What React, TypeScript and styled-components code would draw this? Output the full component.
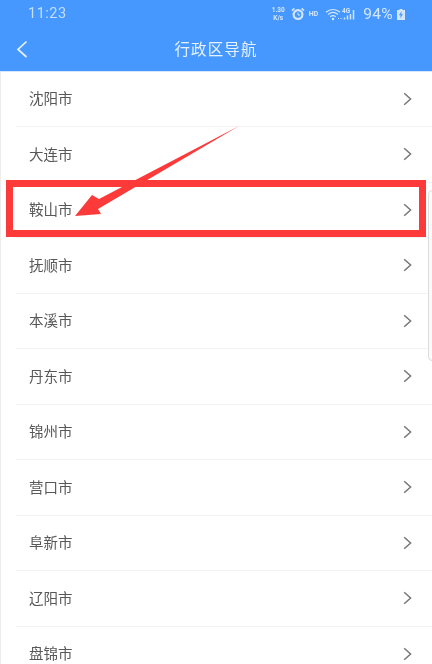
import React from 'react';
import styled, { createGlobalStyle } from 'styled-components';

const GlobalStyle = createGlobalStyle`
  html, body {
    margin: 0;
    padding: 0;
    background: #fff;
  }
`;

const PageDiv = styled.div`
  position: relative;
  width: 432px;
  height: 664px;
  overflow: hidden;
  background: #fff;
  font-family: 'Noto Sans CJK SC', Roboto, sans-serif;
`;

const HeaderDiv = styled.div`
  background: #4698fe;
  border-bottom: 1px solid #d3e6fd;
  color: #e6f1ff;
  filter: blur(0.35px);
`;

const StatusBar = styled.div`
  display: flex;
  align-items: center;
  justify-content: space-between;
  height: 27px;
  padding: 0 27px 0 28px;
`;

const TimeText = styled.span`
  font-family: Roboto, sans-serif;
  font-size: 14.5px;
  letter-spacing: 0.5px;
  color: #c5dffe;
`;

const StatusIcons = styled.div`
  display: flex;
  align-items: center;
  padding-top: 1px;
  color: #d3e6fe;
`;

const SpeedText = styled.span`
  display: flex;
  flex-direction: column;
  align-items: center;
  font-family: Roboto, sans-serif;
  font-size: 6.5px;
  font-weight: 700;
  line-height: 8px;
  margin-right: 6px;
`;

const HdText = styled.span`
  font-family: Roboto, sans-serif;
  font-size: 7px;
  font-weight: 700;
  margin: 0 7px 0 4px;
`;

const BatteryText = styled.span`
  font-family: Roboto, sans-serif;
  font-size: 15.5px;
  margin: 0 4px 0 6px;
  letter-spacing: 0.3px;
`;

const NavBar = styled.div`
  display: flex;
  align-items: center;
  justify-content: center;
  position: relative;
  height: 43.5px;
  padding-bottom: 2px;
  box-sizing: border-box;
`;

const BackIcon = styled.svg`
  position: absolute;
  left: 15px;
  top: 12px;
`;

const TitleText = styled.span`
  font-size: 15.5px;
  letter-spacing: 1.1px;
`;

const RowList = styled.div`
  display: flex;
  flex-direction: column;
  border-left: 1px solid #ececec;
  filter: blur(0.35px);
`;

const Row = styled.div`
  display: flex;
  align-items: center;
  justify-content: space-between;
  flex: 0 0 55.5px;
  box-sizing: border-box;
  margin-left: 15px;
  padding: 0 20px 0 13px;
  border-bottom: 1px solid #f2f2f2;
  color: #585858;
  font-size: 14.5px;
`;

const CityName = styled.span`
  padding-bottom: 2px;
`;

const HighlightBox = styled.div`
  position: absolute;
  left: 6px;
  top: 180px;
  width: 420px;
  height: 57px;
  box-sizing: border-box;
  border: 7px solid #fc3a3a;
`;

const ArrowSvg = styled.svg`
  position: absolute;
  left: 0;
  top: 0;
`;

const ScrollHandle = styled.div`
  position: absolute;
  left: 428px;
  top: 190px;
  width: 12px;
  height: 171px;
  box-sizing: border-box;
  border: 1px solid #dcdcdc;
  border-radius: 4px;
  background: #fafafa;
`;

const cities = ['沈阳市', '大连市', '鞍山市', '抚顺市', '本溪市', '丹东市', '锦州市', '营口市', '阜新市', '辽阳市', '盘锦市'];

function Chevron() {
  return (
    <svg width="9" height="14" viewBox="0 0 9 14" fill="none">
      <path d="M1.2 1.2L7.6 7L1.2 12.8" stroke="#777" strokeWidth="1.5" />
    </svg>
  );
}

export default function App() {
  return (
    <PageDiv>
      <GlobalStyle />
      <HeaderDiv>
        <StatusBar>
          <TimeText>11:23</TimeText>
          <StatusIcons>
            <SpeedText>
              <span>1.30</span>
              <span>K/s</span>
            </SpeedText>
            {/* alarm clock */}
            <svg width="14" height="14" viewBox="0 0 14 14" fill="none">
              <circle cx="7" cy="7.6" r="4.4" stroke="currentColor" strokeWidth="2.2" />
              <path d="M7 5.5v2.5h2" stroke="currentColor" strokeWidth="1" />
              <path d="M1 3.6L3.4 1.3M13 3.6L10.6 1.3" stroke="currentColor" strokeWidth="1.6" />
            </svg>
            <HdText>HD</HdText>
            {/* wifi */}
            <svg width="17" height="13" viewBox="0 0 17 13" fill="none">
              <path d="M1 4.2C5 .6 11 .6 15 4.2" stroke="currentColor" strokeWidth="1.2" />
              <path d="M3 6.6C6 4 10 4 13 6.6" stroke="currentColor" strokeWidth="1.2" />
              <path d="M5.2 8.8C7 7.4 9 7.4 10.8 8.8" stroke="currentColor" strokeWidth="1.2" />
              <circle cx="8" cy="11" r="1.2" fill="currentColor" />
              <path d="M13 10.5h1M15.5 10.5h1" stroke="currentColor" strokeWidth="1.2" />
            </svg>
            {/* 4G signal */}
            <svg width="15" height="14" viewBox="0 0 15 14" fill="none">
              <text x="0" y="6" fontSize="6.5" fontWeight="700" fontFamily="Roboto, sans-serif" fill="currentColor">4G</text>
              <path d="M2.5 12.5v-2M5.5 12.5v-4M8.5 12.5V7M11.5 12.5V3" stroke="currentColor" strokeWidth="1.5" />
            </svg>
            <BatteryText>94%</BatteryText>
            {/* charging battery */}
            <svg width="8" height="11" viewBox="0 0 8 11">
              <path d="M2.5 0h3v1H8v10H0V1h2.5z" fill="currentColor" />
              <path d="M4.6 2L2 6.2h1.7L3.2 9.4 6 5.2H4.2z" fill="#4698fe" />
            </svg>
          </StatusIcons>
        </StatusBar>
        <NavBar>
          <BackIcon width="14" height="20" viewBox="0 0 14 20" fill="none">
            <path d="M11.5 2.5L3 10.5L11.5 18" stroke="#e6f1ff" strokeWidth="1.7" />
          </BackIcon>
          <TitleText>行政区导航</TitleText>
        </NavBar>
      </HeaderDiv>
      <RowList>
        {cities.map((city) => (
          <Row key={city}>
            <CityName>{city}</CityName>
            <Chevron />
          </Row>
        ))}
      </RowList>
      <ScrollHandle />
      <HighlightBox />
      <ArrowSvg width="432" height="664" viewBox="0 0 432 664">
        <polygon points="239,126 99,199 92,195 75,216 101,214 98,209" fill="#fc3a3a" />
      </ArrowSvg>
    </PageDiv>
  );
}
